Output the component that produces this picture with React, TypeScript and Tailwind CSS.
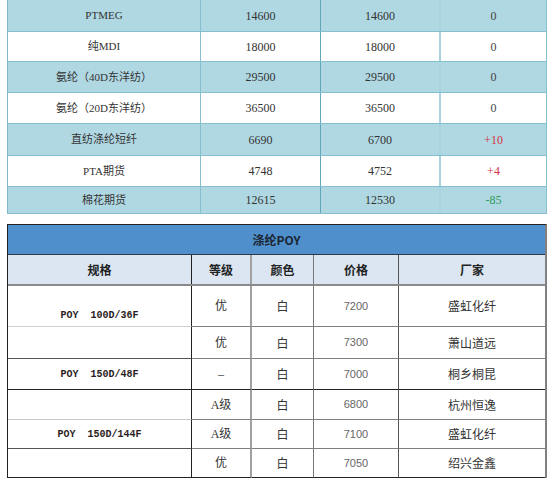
const priceRows = [
  { name: 'PTMEG', a: '14600', b: '14600', diff: '0', h: 'h-[32px]', bg: 'bg-[#b0d8e3]' },
  { name: '纯MDI', a: '18000', b: '18000', diff: '0', h: 'h-[30px]', bg: 'bg-white' },
  { name: '氨纶（40D东洋纺）', a: '29500', b: '29500', diff: '0', h: 'h-[31px]', bg: 'bg-[#b0d8e3]' },
  { name: '氨纶（20D东洋纺）', a: '36500', b: '36500', diff: '0', h: 'h-[31px]', bg: 'bg-white' },
  { name: '直纺涤纶短纤', a: '6690', b: '6700', diff: '+10', h: 'h-[32px]', bg: 'bg-[#b0d8e3]' },
  { name: 'PTA期货', a: '4748', b: '4752', diff: '+4', h: 'h-[31px]', bg: 'bg-white' },
  { name: '棉花期货', a: '12615', b: '12530', diff: '-85', h: 'h-[27px]', bg: 'bg-[#b0d8e3]' },
];

function diffColor(d: string) {
  if (d.startsWith('+')) return 'text-[#d8323f]';
  if (d.startsWith('-')) return 'text-[#2f9a5c]';
  return 'text-[#444]';
}

const poyRows = [
  { spec: 'POY  100D/36F', grade: '优', price: '7200', maker: '盛虹化纤', h: 'h-[41px]', specLine: 'border-b-[#d0d0d0]', line: 'border-b-[#808080]', bottom: true },
  { spec: '', grade: '优', price: '7300', maker: '萧山道远', h: 'h-[32px]', specLine: 'border-b-[#555]', line: 'border-b-[#808080]' },
  { spec: 'POY  150D/48F', grade: '–', price: '7000', maker: '桐乡桐昆', h: 'h-[31px]', specLine: 'border-b-[#222]', line: 'border-b-[#222]' },
  { spec: '', grade: 'A级', price: '6800', maker: '杭州恒逸', h: 'h-[30px]', specLine: 'border-b-[#c8c8c8]', line: 'border-b-[#808080]' },
  { spec: 'POY  150D/144F', grade: 'A级', price: '7100', maker: '盛虹化纤', h: 'h-[29px]', specLine: 'border-b-[#555]', line: 'border-b-[#808080]' },
  { spec: '', grade: '优', price: '7050', maker: '绍兴金鑫', h: 'h-[29px]', specLine: 'border-b-[#222]', line: 'border-b-[#222]' },
];

const serif = "font-['Liberation_Serif','Noto_Sans_CJK_SC',serif]";

export default function App() {
  return (
    <div className="w-[554px] h-[485px] bg-white overflow-hidden">
      {/* price comparison table */}
      <div className={`ml-[7px] w-[540px] border-l border-[#7fb9c9] ${serif} text-[#333]`}>
        {priceRows.map((r) => (
          <div key={r.name} className={`flex ${r.h} ${r.bg} border-b border-[#86bfcd]`}>
            <div className="w-[193px] flex items-center justify-center border-r border-[#86bfcd] text-[11px]">
              {r.name}
            </div>
            <div className="w-[120px] flex items-center justify-center border-r border-[#5fa6ba] text-[12px]">
              {r.a}
            </div>
            <div className="w-[120px] flex items-center justify-center border-r-2 border-[#a9d4df] text-[12px]">
              {r.b}
            </div>
            <div className={`flex-1 flex items-center justify-center border-r border-[#86bfcd] text-[12px] ${diffColor(r.diff)}`}>
              {r.diff}
            </div>
          </div>
        ))}
      </div>

      {/* POY table */}
      <div className="ml-[7px] mt-[10px] w-[540px] border-l border-t border-[#222] border-r-2 border-r-[#808080] font-['Noto_Sans_CJK_SC',sans-serif]">
        <div className="h-[30px] bg-[#4f8fcb] border-b border-[#2a3a4a] flex items-center justify-center text-[12px] font-bold text-[#1b2633]">
          涤纶POY
        </div>
        <div className="flex h-[31px] bg-[#dbe6f2] border-b-2 border-[#8a8a8a] text-[12px] font-bold text-[#222]">
          <div className="w-[184px] flex items-center justify-center border-r border-[#222]">规格</div>
          <div className="w-[60px] flex items-center justify-center border-r-2 border-[#a0a0a0]">等级</div>
          <div className="w-[62px] flex items-center justify-center border-r border-[#777]">颜色</div>
          <div className="w-[85px] flex items-center justify-center border-r border-[#555]">价格</div>
          <div className="flex-1 flex items-center justify-center">厂家</div>
        </div>
        {poyRows.map((r, i) => (
          <div key={i} className={`flex ${r.h}`}>
            <div
              className={`w-[184px] flex justify-center border-r border-[#222] border-b ${r.specLine} ${
                r.bottom ? 'items-end pb-[3px]' : 'items-center'
              } font-['Liberation_Mono',monospace] font-bold text-[10px] text-[#2b1d1d] whitespace-pre`}
            >
              {r.spec}
            </div>
            <div className={`w-[60px] flex items-center justify-center border-r-2 border-r-[#a0a0a0] border-b ${r.line} text-[12px] text-[#333] ${serif}`}>
              {r.grade}
            </div>
            <div className={`w-[62px] flex items-center justify-center border-r border-r-[#777] border-b ${r.line} text-[12px] text-[#333]`}>
              白
            </div>
            <div className={`w-[85px] flex items-center justify-center border-r border-r-[#555] border-b ${r.line} text-[11px] text-[#666] font-['Liberation_Sans',sans-serif]`}>
              {r.price}
            </div>
            <div className={`flex-1 flex items-center justify-center border-b ${r.line} text-[12px] text-[#333]`}>
              {r.maker}
            </div>
          </div>
        ))}
      </div>
    </div>
  );
}
